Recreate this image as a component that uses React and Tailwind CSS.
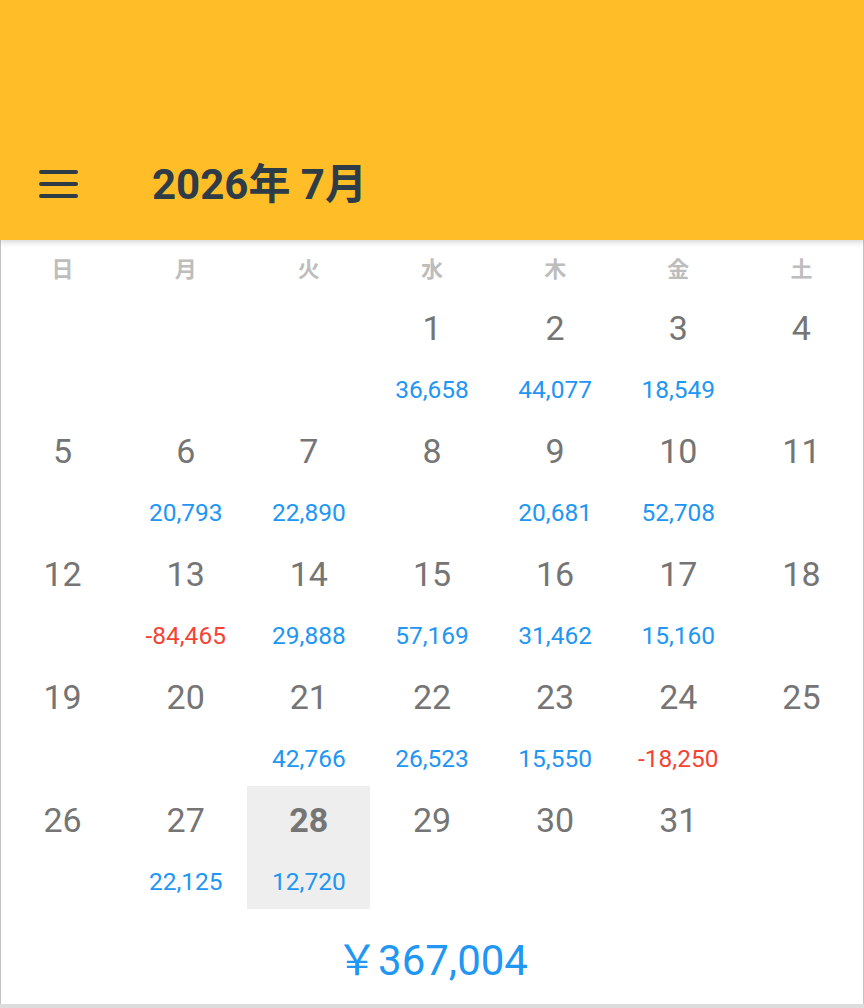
const WEEKDAYS = ['日', '月', '火', '水', '木', '金', '土']

// amounts per day; negative values are shown in red
const AMOUNTS = {
  1: 36658, 2: 44077, 3: 18549,
  6: 20793, 7: 22890, 9: 20681, 10: 52708,
  13: -84465, 14: 29888, 15: 57169, 16: 31462, 17: 15160,
  21: 42766, 22: 26523, 23: 15550, 24: -18250,
  27: 22125, 28: 12720,
}

const TODAY = 28
const FIRST_WEEKDAY = 3
const DAYS_IN_MONTH = 31

const fmt = (n) => n.toLocaleString('en-US')

function DayCell({ day }) {
  if (!day) return <div className="h-[123px]" />
  const amount = AMOUNTS[day]
  const isToday = day === TODAY
  return (
    <div className={`h-[123px] flex flex-col items-center ${isToday ? 'bg-[#eeeeee]' : ''}`}>
      <span
        className={`mt-[14px] text-[34px] leading-[40px] text-[#757575] ${isToday ? 'font-bold' : ''}`}
      >
        {day}
      </span>
      {amount !== undefined && (
        <span
          className={`mt-[27px] text-[24.5px] leading-[30px] ${amount < 0 ? 'text-[#f44336]' : 'text-[#2196f3]'}`}
        >
          {fmt(amount)}
        </span>
      )}
    </div>
  )
}

export default function App() {
  const cells = []
  for (let i = 0; i < FIRST_WEEKDAY; i++) cells.push(null)
  for (let d = 1; d <= DAYS_IN_MONTH; d++) cells.push(d)
  while (cells.length % 7) cells.push(null)

  return (
    <div
      className="w-[864px] h-[1008px] bg-white flex flex-col overflow-hidden"
      style={{ fontFamily: 'Roboto, "Noto Sans CJK JP", sans-serif' }}
    >
      <header className="relative z-10 h-[240px] shrink-0 bg-[#ffbd27] flex items-end shadow-[0_2px_6px_rgba(0,0,0,0.18)]">
        <div className="h-[112px] w-full flex items-center">
          <button type="button" className="ml-[39px] w-[40px] flex flex-col gap-[8px]">
            <span className="block h-[4px] w-[39px] rounded-sm bg-[#2e3c48]" />
            <span className="block h-[4px] w-[39px] rounded-sm bg-[#2e3c48]" />
            <span className="block h-[4px] w-[39px] rounded-sm bg-[#2e3c48]" />
          </button>
          <h1 className="ml-[73px] text-[42px] font-bold text-[#2e3c48]">2026年 7月</h1>
        </div>
      </header>

      <main className="flex-1 flex flex-col border-x border-[#c4c4c4]">
        <div className="grid grid-cols-7 h-[54px] items-center pt-[5px]">
          {WEEKDAYS.map((w) => (
            <span key={w} className="text-center text-[22px] font-bold text-[#bdbdbd]">
              {w}
            </span>
          ))}
        </div>
        <div className="grid grid-cols-7">
          {cells.map((d, i) => (
            <DayCell key={i} day={d} />
          ))}
        </div>
        <div className="flex-1 flex items-center justify-center text-[42px] text-[#2196f3] pt-[8px]">
          <span>￥</span>
          <span>367,004</span>
        </div>
      </main>
      <div className="h-[4px] shrink-0 bg-[#dcdcdc]" />
    </div>
  )
}
